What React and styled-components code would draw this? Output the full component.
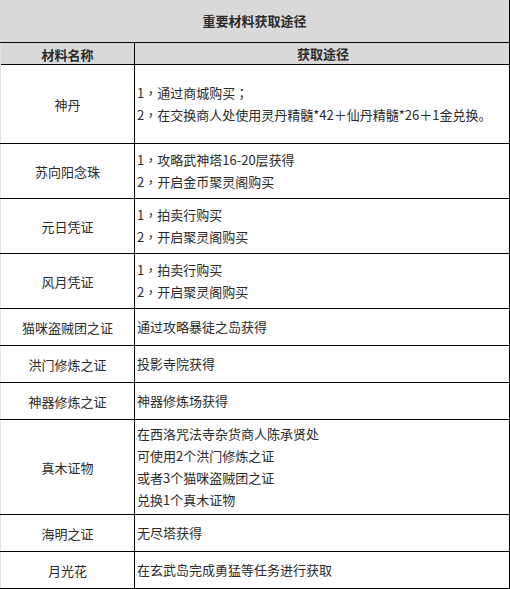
import React from 'react'
import styled, { createGlobalStyle } from 'styled-components'

const Global = createGlobalStyle`
  html, body {
    margin: 0;
    padding: 0;
    background: #fff;
  }
  * {
    box-sizing: border-box;
  }
`

const Sheet = styled.div`
  width: 510px;
  font-family: "Noto Sans CJK SC", "Noto Sans", sans-serif;
  font-size: 13px;
  color: #2b2b2b;
`

const Title = styled.div`
  height: 43px;
  display: flex;
  align-items: center;
  justify-content: center;
  background: #d9d9d9;
  border-right: 1px solid #000;
  border-bottom: 1px solid #000;
  font-weight: bold;
  padding-bottom: 2px;
`

const Row = styled.div`
  display: grid;
  grid-template-columns: 135px 1fr;
  height: ${p => p.h}px;
  border-bottom: 1px solid #000;
  background: ${p => (p.head ? '#d9d9d9' : '#fff')};
  font-weight: ${p => (p.head ? 'bold' : 'normal')};
`

const Name = styled.div`
  display: flex;
  align-items: center;
  justify-content: center;
  border-left: 1px solid #e4e4e4;
  border-right: 1px solid #000;
`

const Way = styled.div`
  display: flex;
  flex-direction: column;
  justify-content: center;
  align-items: ${p => (p.head ? 'center' : 'flex-start')};
  padding-left: 2px;
  border-right: 1px solid #000;
  line-height: 22px;
`

// full-width comma / semicolon sit centred in the source font
const Punct = styled.span`
  font-family: "Noto Sans CJK TC", sans-serif;
`

const rows = [
  { name: '神丹', h: 79, lines: ['1，通过商城购买；', '2，在交换商人处使用灵丹精髓*42＋仙丹精髓*26＋1金兑换。'] },
  { name: '苏向阳念珠', h: 55, lines: ['1，攻略武神塔16-20层获得', '2，开启金币聚灵阁购买'] },
  { name: '元日凭证', h: 55, lines: ['1，拍卖行购买', '2，开启聚灵阁购买'] },
  { name: '风月凭证', h: 55, lines: ['1，拍卖行购买', '2，开启聚灵阁购买'] },
  { name: '猫咪盗贼团之证', h: 37, lines: ['通过攻略暴徒之岛获得'] },
  { name: '洪门修炼之证', h: 37, lines: ['投影寺院获得'] },
  { name: '神器修炼之证', h: 37, lines: ['神器修炼场获得'] },
  {
    name: '真木证物',
    h: 95,
    lines: ['在西洛咒法寺杂货商人陈承贤处', '可使用2个洪门修炼之证', '或者3个猫咪盗贼团之证', '兑换1个真木证物'],
  },
  { name: '海明之证', h: 37, lines: ['无尽塔获得'] },
  { name: '月光花', h: 37, lines: ['在玄武岛完成勇猛等任务进行获取'] },
]

const Line = ({ text }) => (
  <div>
    {text.split(/([，；])/).map((part, i) =>
      part === '，' || part === '；' ? <Punct key={i}>{part}</Punct> : part
    )}
  </div>
)

export default function App() {
  return (
    <>
      <Global />
      <Sheet>
        <Title>重要材料获取途径</Title>
        <Row h={22} head>
          <Name>材料名称</Name>
          <Way head>获取途径</Way>
        </Row>
        {rows.map(r => (
          <Row key={r.name} h={r.h}>
            <Name>{r.name}</Name>
            <Way>
              {r.lines.map(l => (
                <Line key={l} text={l} />
              ))}
            </Way>
          </Row>
        ))}
      </Sheet>
    </>
  )
}
